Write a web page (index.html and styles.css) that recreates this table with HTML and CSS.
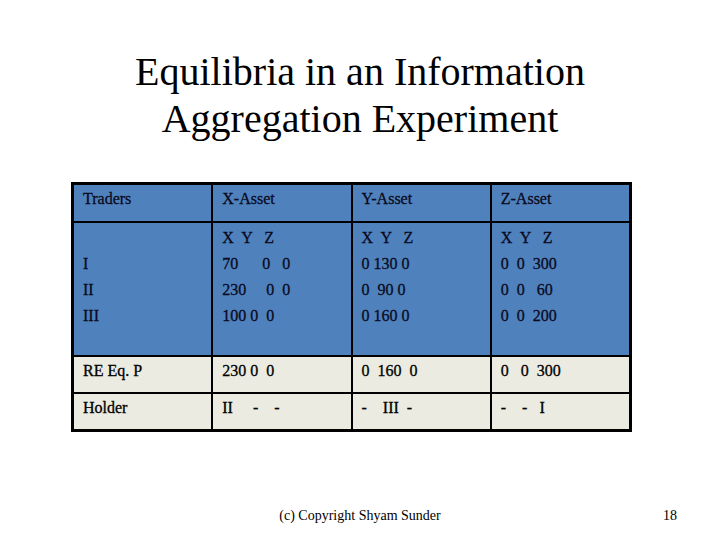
FILE: index.html
```html
<!DOCTYPE html>
<html>
<head>
<meta charset="utf-8">
<link rel="stylesheet" href="styles.css">
</head>
<body>
<div class="slide">
  <h1 class="title">Equilibria in an Information<br>Aggregation Experiment</h1>
  <div class="table">
    <div class="cell head">Traders</div>
    <div class="cell head">X-Asset</div>
    <div class="cell head">Y-Asset</div>
    <div class="cell head">Z-Asset</div>

    <div class="cell body"><div class="ln"> </div><div class="ln">I</div><div class="ln">II</div><div class="ln">III</div></div>
    <div class="cell body"><div class="ln">X  Y   Z</div><div class="ln">70      0   0</div><div class="ln">230     0  0</div><div class="ln">100 0  0</div></div>
    <div class="cell body"><div class="ln">X  Y   Z</div><div class="ln">0 130 0</div><div class="ln">0  90 0</div><div class="ln">0 160 0</div></div>
    <div class="cell body"><div class="ln">X  Y   Z</div><div class="ln">0  0  300</div><div class="ln">0  0   60</div><div class="ln">0  0  200</div></div>

    <div class="cell light">RE Eq. P</div>
    <div class="cell light">230 0  0</div>
    <div class="cell light">0  160  0</div>
    <div class="cell light">0   0  300</div>

    <div class="cell light">Holder</div>
    <div class="cell light">II     -    -</div>
    <div class="cell light">-    III  -</div>
    <div class="cell light">-    -   I</div>
  </div>
  <div class="footer">
    <span></span>
    <span class="copy">(c) Copyright Shyam Sunder</span>
    <span class="num">18</span>
  </div>
</div>
</body>
</html>
```

FILE: styles.css
```css
html, body {
  margin: 0;
  padding: 0;
  background: #ffffff;
}
body {
  width: 720px;
  height: 540px;
  overflow: hidden;
  font-family: "Liberation Serif", "Times New Roman", serif;
  color: #000;
}
.slide {
  display: flex;
  flex-direction: column;
  align-items: center;
  height: 540px;
}
.title {
  margin: 48px 0 0 0;
  font-weight: normal;
  font-size: 40px;
  line-height: 47px;
  text-align: center;
}
.table {
  margin-top: 40px;
  align-self: flex-start;
  margin-left: 71px;
  width: 561px;
  box-sizing: border-box;
  display: grid;
  grid-template-columns: 1fr 1fr 1fr 1fr;
  grid-template-rows: 36px 132px 35px 35px;
  gap: 2px;
  background: #000;
  border: 3px solid #000;
}
.cell {
  font-size: 16px;
  line-height: 26px;
  padding: 1px 9px 0 9px;
  white-space: pre;
  -webkit-text-stroke: 0.3px currentColor;
}
.head, .body {
  background: #4f81bd;
  color: #0a0a1e;
}
.body {
  padding-top: 2px;
}
.light {
  background: #ecebe1;
  color: #000;
}
.ln {
  height: 26px;
}
.footer {
  margin-top: auto;
  margin-bottom: 16px;
  width: 720px;
  box-sizing: border-box;
  padding: 0 43px 0 43px;
  display: grid;
  grid-template-columns: 1fr auto 1fr;
  font-size: 14px;
  line-height: 16px;
}
.num {
  text-align: right;
}
```
